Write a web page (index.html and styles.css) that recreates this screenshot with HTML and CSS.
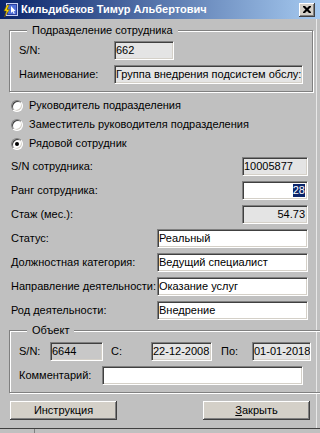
FILE: index.html
```html
<!DOCTYPE html>
<html>
<head>
<meta charset="utf-8">
<link rel="stylesheet" href="styles.css">
</head>
<body>
<div class="window">
  <div class="titlebar">
    <svg class="appicon" width="16" height="16" viewBox="0 0 16 16">
      <rect x="3.5" y="1.5" width="11" height="12" fill="#2a3f9e" stroke="#c8d0f0"/>
      <rect x="5" y="3" width="8" height="9" fill="#4f6fd8"/>
      <path d="M8 4 L8 11 L9.6 9.6 L10.8 12 L11.8 11.5 L10.6 9.2 L12.6 9 Z" fill="#fff"/>
      <path d="M4 3 L1 9 L3.5 9 L1.5 15 L6.5 7.5 L4 7.5 L6 3 Z" fill="#ffe000" stroke="#7a5a00" stroke-width="0.6"/>
    </svg>
    <span class="title">Кильдибеков Тимур Альбертович</span>
    <span class="closebtn">
      <svg width="8" height="7" viewBox="0 0 8 7"><path d="M0 0h2l2 2 2-2h2v1l-2.5 2.5L8 6v1H6L4 5 2 7H0V6l2.5-2.5L0 1z" fill="#000"/></svg>
    </span>
  </div>
  <div class="client">
    <fieldset class="group g1">
      <legend>Подразделение сотрудника</legend>
      <div class="grow">
        <span class="lbl lw1">S/N:</span>
        <span class="field ro w-sn1">662</span>
      </div>
      <div class="grow">
        <span class="lbl lw1">Наименование:</span>
        <span class="field ro w-name">Группа внедрения подсистем обслу:</span>
      </div>
    </fieldset>

    <div class="radios">
      <div class="radiorow"><span class="radio"></span><span>Руководитель подразделения</span></div>
      <div class="radiorow"><span class="radio"></span><span>Заместитель руководителя подразделения</span></div>
      <div class="radiorow"><span class="radio checked"></span><span>Рядовой сотрудник</span></div>
    </div>

    <div class="frows">
      <div class="frow">
        <span class="lbl">S/N сотрудника:</span>
        <span class="field ro w-short">10005877</span>
      </div>
      <div class="frow">
        <span class="lbl">Ранг сотрудника:</span>
        <span class="field w-short right"><span class="sel">28</span></span>
      </div>
      <div class="frow">
        <span class="lbl">Стаж (мес.):</span>
        <span class="field ro w-short right">54.73</span>
      </div>
      <div class="frow">
        <span class="lbl">Статус:</span>
        <span class="field w-long">Реальный</span>
      </div>
      <div class="frow">
        <span class="lbl">Должностная категория:</span>
        <span class="field w-long">Ведущий специалист</span>
      </div>
      <div class="frow">
        <span class="lbl">Направление деятельности:</span>
        <span class="field w-long">Оказание услуг</span>
      </div>
      <div class="frow">
        <span class="lbl">Род деятельности:</span>
        <span class="field w-long">Внедрение</span>
      </div>
    </div>

    <fieldset class="group g2">
      <legend>Объект</legend>
      <div class="grow">
        <span class="lbl lw2">S/N:</span>
        <span class="field ro2 w-obj">6644</span>
        <span class="lbl lw3">С:</span>
        <span class="field ro w-d1">22-12-2008</span>
        <span class="lbl lw4">По:</span>
        <span class="field ro w-d2">01-01-2018</span>
      </div>
      <div class="grow">
        <span class="lbl lw5">Комментарий:</span>
        <span class="field w-comment"></span>
      </div>
    </fieldset>

    <div class="buttons">
      <span class="btn">Инструкция</span>
      <span class="btn"><u>З</u>акрыть</span>
    </div>
  </div>
  <div class="bottomstrip"><span class="tick"></span></div>
</div>
</body>
</html>
```

FILE: styles.css
```css
* {
  box-sizing: border-box;
  margin: 0;
  padding: 0;
}
html, body {
  width: 320px;
  height: 433px;
  overflow: hidden;
}
body {
  background: #c0c0c0;
  font-family: "Liberation Sans", Arial, sans-serif;
  font-size: 11px;
  line-height: 13px;
  color: #000;
}
.window {
  width: 320px;
  height: 433px;
  display: flex;
  flex-direction: column;
  background: #c0c0c0;
}
.titlebar {
  height: 19px;
  flex: none;
  display: flex;
  align-items: center;
  padding: 0 5px 0 3px;
  background: linear-gradient(to right, #0a246a, #a6caf0);
}
.appicon {
  flex: none;
  margin-right: 2px;
}
.title {
  flex: 1;
  color: #fff;
  font-weight: bold;
  white-space: nowrap;
}
.closebtn {
  flex: none;
  width: 16px;
  height: 14px;
  display: flex;
  align-items: center;
  justify-content: center;
  background: #d4d0c8;
  box-shadow: inset -1px -1px 0 #404040, inset 1px 1px 0 #fff, inset -2px -2px 0 #808080;
}
.client {
  flex: 1;
  padding: 0 0 0 9px;
  width: 317px;
  border-right: 1px solid #e8e8e8;
}
.group {
  width: 302px;
  border: 1px solid #808080;
  box-shadow: inset 1px 1px 0 #fff, 1px 1px 0 #fff;
  padding: 4px 9px 7px 9px;
  display: flex;
  flex-direction: column;
  gap: 5px;
}
.group legend {
  margin-left: 8px;
  padding: 0 5px;
  line-height: 13px;
  background: #c0c0c0;
}
.g1 {
  margin-top: 5px;
}
.g2 {
  margin-top: 4px;
  padding-top: 5px;
}
.grow {
  display: flex;
  align-items: center;
  height: 19px;
}
.lbl {
  white-space: nowrap;
  flex: none;
}
.lw1 { width: 95px; }
.lw2 { width: 31px; }
.lw3 { width: 40px; margin-left: 8px; }
.lw4 { width: 31px; margin-left: 9px; }
.lw5 { width: 83px; }
.field {
  flex: none;
  height: 19px;
  display: flex;
  align-items: center;
  padding: 0 1px;
  background: #fff;
  border-style: solid;
  border-width: 1px;
  border-color: #808080 #fff #fff #808080;
  box-shadow: inset 1px 1px 0 #404040, inset -1px -1px 0 #d4d0c8;
  white-space: nowrap;
  overflow: hidden;
  line-height: 15px;
}
.field.right {
  justify-content: flex-end;
  padding-right: 2px;
}
.ro { background: #e4e4e4; }
.ro2 { background: #c8c8c8; }
.w-sn1 { width: 60px; }
.w-name { width: 189px; }
.w-short { width: 66px; }
.w-long { width: 151px; }
.w-obj { width: 53px; }
.w-d1 { width: 61px; }
.w-d2 { width: 59px; }
.w-comment { width: 201px; }
.sel {
  background: #0a246a;
  color: #fff;
  line-height: 13px;
}
.radios {
  margin-top: 4px;
  padding-left: 2px;
  display: flex;
  flex-direction: column;
}
.radiorow {
  height: 19px;
  display: flex;
  align-items: center;
}
.radio {
  flex: none;
  position: relative;
  width: 12px;
  height: 12px;
  margin-right: 6px;
  border-radius: 50%;
  background: #fff;
  border: 1px solid;
  border-color: #808080 #fff #fff #808080;
  box-shadow: inset 1px 1px 0 #404040, inset -1px -1px 0 #d4d0c8;
}
.radio.checked::after {
  content: "";
  position: absolute;
  left: 3px;
  top: 3px;
  width: 4px;
  height: 4px;
  border-radius: 50%;
  background: #000;
}
.frows {
  margin-top: 4px;
  padding-left: 2px;
  width: 299px;
  display: flex;
  flex-direction: column;
  gap: 5px;
}
.frow {
  height: 19px;
  display: flex;
  align-items: center;
  justify-content: space-between;
}
.buttons {
  margin-top: 8px;
  padding-left: 1px;
  width: 301px;
  display: flex;
  justify-content: space-between;
}
.btn {
  width: 107px;
  height: 19px;
  display: flex;
  align-items: center;
  justify-content: center;
  background: #d4d0c8;
  box-shadow: inset -1px -1px 0 #404040, inset 1px 1px 0 #fff, inset -2px -2px 0 #808080;
}
.btn u {
  text-decoration: underline;
}
.bottomstrip {
  flex: none;
  height: 5px;
  position: relative;
  border-top: 1px solid #404040;
  background: #c0c0c0;
}
.tick {
  position: absolute;
  left: 34px;
  top: 0;
  width: 1px;
  height: 4px;
  background: #808080;
}
```
